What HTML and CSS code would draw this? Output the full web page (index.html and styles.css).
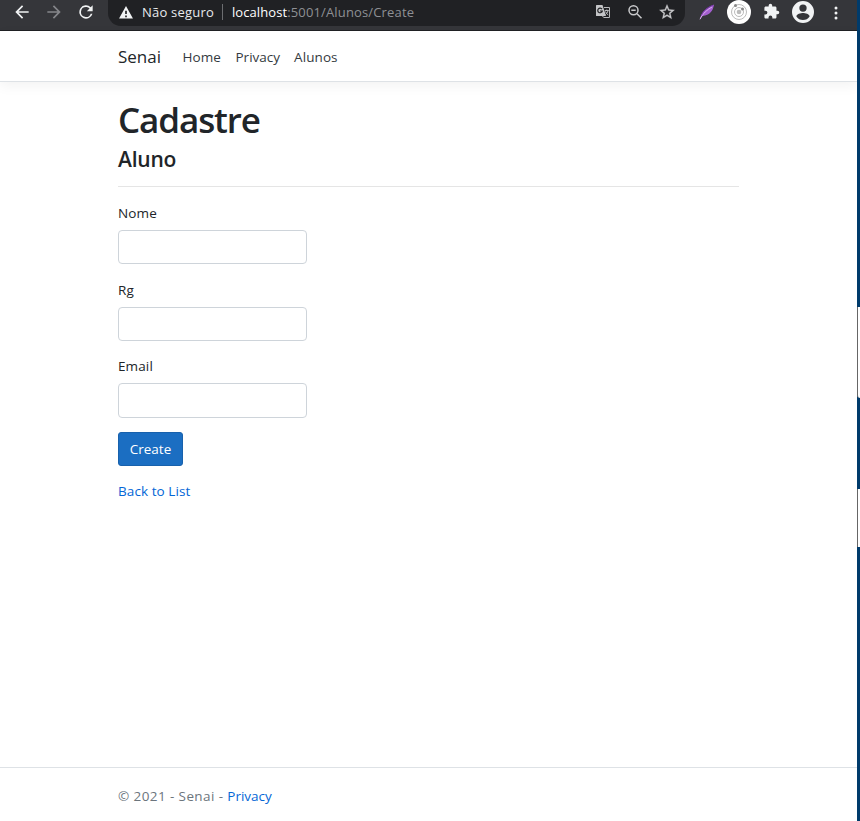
FILE: index.html
```html
<!DOCTYPE html>
<html lang="pt-BR">
<head>
<meta charset="utf-8">
<title>Create - Senai</title>
<link rel="stylesheet" href="styles.css">
</head>
<body>
<div class="window">
  <header class="toolbar">
    <svg class="ico back" viewBox="0 0 24 24"><path d="M20 11H7.8l5.6-5.6L12 4l-8 8 8 8 1.4-1.4L7.8 13H20z"/></svg>
    <svg class="ico forward" viewBox="0 0 24 24"><path d="M4 11h12.2l-5.6-5.6L12 4l8 8-8 8-1.4-1.4 5.6-5.6H4z"/></svg>
    <svg class="ico reload" viewBox="0 0 24 24"><path d="M17.65 6.35A8 8 0 1 0 19.73 14h-2.08A6 6 0 1 1 12 6c1.66 0 3.14.69 4.22 1.78L13 11h7V4z"/></svg>
    <div class="address">
      <svg class="warn" viewBox="0 0 16 14"><path fill-rule="evenodd" d="M8 0l7.500 13.500H.5zM7.100 5v3.700h1.800V5zM7.100 10.200v1.800h1.800v-1.800z"/></svg>
      <span class="security">Não seguro</span>
      <span class="divider"></span>
      <span class="url"><b>localhost</b><span class="path">:5001/Alunos/Create</span></span>
      <div class="actions">
        <svg class="translate" viewBox="0 0 16 16"><path class="fill" d="M1.500 1h6l3.500 11H1.500Q1 12 1 11.500v-10Q1 1 1.500 1z"/><path class="line" d="M9 3.500h5.500v10H8.700L7.500 12"/><path class="dark" d="M7 5.200A2.300 2.300 0 1 0 7.300 7H5"/><path class="line" d="M9.800 6.500h4M11.800 5.500v1M13 6.700c-.5 2-1.500 3-2.600 4M10.500 7.500c.5 1.500 1.500 2.500 2.700 3.500"/></svg>
        <svg class="search" viewBox="0 0 16 16"><circle cx="6.500" cy="6.200" r="4.500"/><path d="M10 9.700l4.500 4.500M4.300 6.200h4.400"/></svg>
        <svg class="star" viewBox="0 0 24 24"><path d="M22 9.240l-7.190-.62L12 2 9.190 8.630 2 9.240l5.460 4.730L5.820 21 12 17.270 18.180 21l-1.630-7.030zM12 15.400l-3.760 2.270 1-4.280-3.320-2.880 4.380-.38L12 6.100l1.710 4.040 4.380.38-3.320 2.880 1 4.280z"/></svg>
      </div>
    </div>
    <svg class="feather" viewBox="0 0 16 16"><path d="M1 15C2 10 4 6 15 .5 14 7 11 11 3.500 12z" fill="#a45fd0"/><path d="M1 15.300C4 9 8 6 13 3" fill="none" stroke="#d9b2ed"/><path d="M2.500 11.500C4 7 8 3.500 14 1.300" fill="none" stroke="#7b38ad"/></svg>
    <svg class="orbit" viewBox="0 0 24 24"><circle cx="12" cy="12" r="12" fill="#fff"/><g fill="none" stroke="#bbb"><circle cx="12" cy="12" r="7.500"/><circle cx="12" cy="12" r="4.500"/></g><circle cx="12" cy="12" r="2.300" fill="#bbb"/><circle cx="8.500" cy="5.500" r="1.500" fill="#888"/><circle cx="15.500" cy="9" r="1.500" fill="#888"/></svg>
    <svg class="puzzle" viewBox="0 0 24 24"><path d="M20.500 11H19V7c0-1.100-.9-2-2-2h-4V3.500a2.500 2.500 0 0 0-5 0V5H4c-1.100 0-2 .9-2 2v3.800h1.500a2.700 2.700 0 0 1 0 5.400H2V20c0 1.100.9 2 2 2h3.800v-1.500a2.700 2.700 0 0 1 5.400 0V22H17c1.100 0 2-.9 2-2v-4h1.500a2.500 2.500 0 0 0 0-5z"/></svg>
    <svg class="profile" viewBox="0 0 24 24"><path fill-rule="evenodd" d="M12 0a12 12 0 1 0 0 24 12 12 0 0 0 0-24zm0 3.700a4 4 0 1 1 0 8 4 4 0 0 1 0-8zm0 17a8.600 8.600 0 0 1-7.200-3.900c0-2.400 4.800-3.700 7.200-3.700s7.200 1.300 7.200 3.700a8.600 8.600 0 0 1-7.200 3.900z"/></svg>
    <svg class="more" viewBox="0 0 4 14"><circle cx="2" cy="2" r="1.500"/><circle cx="2" cy="7" r="1.500"/><circle cx="2" cy="12" r="1.500"/></svg>
  </header>
  <nav class="navbar">
    <a class="brand">Senai</a>
    <a class="nav-home">Home</a>
    <a class="nav-privacy">Privacy</a>
    <a class="nav-alunos">Alunos</a>
  </nav>
  <main>
    <h1><span>Cadastre</span></h1>
    <h4><span>Aluno</span></h4>
    <hr>
    <form>
      <div class="group"><label for="nome">Nome</label><input id="nome" type="text"></div>
      <div class="group"><label for="rg">Rg</label><input id="rg" type="text"></div>
      <div class="group last"><label for="email">Email</label><input id="email" type="text"></div>
      <button type="button">Create</button>
    </form>
    <a class="list-link">Back to List</a>
  </main>
  <footer><span class="copy">© 2021 - Senai - </span><a>Privacy</a></footer>
</div>
<aside class="desktop"><i class="pane first"></i><i class="pane second"></i></aside>
</body>
</html>
```
FILE: styles.css
```css
* { box-sizing: border-box; }
body { margin: 0; height: 821px; overflow: hidden; display: flex; background: #fff; color: #212529; font: 13.5px/20px "Open Sans", "Noto Sans", sans-serif; }
.window { width: 857px; height: 821px; display: flex; flex-direction: column; }
.toolbar { height: 31px; flex: none; display: flex; align-items: flex-start; background: #35363a; border-bottom: 1px solid #202124; fill: #f1f3f4; }
svg { flex: none; display: block; }
.ico { width: 20px; height: 20px; margin-top: 2px; }
.back { margin-left: 12px; }
.forward { margin-left: 12px; fill: #85868a; }
.reload { margin-left: 12px; }
.address { width: 577px; height: 26px; margin-left: 12px; padding-left: 10px; display: flex; background: #202124; border-radius: 0 0 13px 13px; color: #e8eaed; line-height: 25px; font-size: 13px; white-space: nowrap; }
.warn { width: 16px; height: 13px; margin-top: 6px; }
.security { width: 72px; margin-left: 8px; letter-spacing: .22px; }
.divider { width: 1px; height: 16px; margin: 4px 9px 0 8px; background: #6c6d70; }
.url { width: 363px; }
.url b { font-weight: 400; color: #fff; letter-spacing: .08px; }
.path { color: #8e9094; letter-spacing: .15px; }
.actions { display: flex; fill: #c8c9cb; }
.translate { width: 16px; height: 16px; margin-top: 4px; }
.translate .fill { fill: #c4c5c7; }
.translate .line { fill: none; stroke: #b8b9bb; }
.translate .dark { fill: none; stroke: #202124; stroke-width: 1.200; }
.search { width: 16px; height: 16px; margin: 4px 0 0 16px; fill: none; stroke: #c8c9cb; stroke-width: 1.500; }
.star { width: 18px; height: 18px; margin: 3px 0 0 15px; stroke: #c8c9cb; stroke-width: .4; }
.feather { width: 16px; height: 16px; margin: 4px 0 0 14px; }
.orbit { width: 24px; height: 24px; margin-left: 12px; }
.puzzle { width: 17px; height: 17px; margin: 3px 0 0 12px; }
.profile { width: 22px; height: 22px; margin: 1px 0 0 12px; }
.more { width: 4px; height: 14px; margin: 6px 0 0 20px; }
.navbar { height: 51px; flex: none; display: flex; padding: 0 118px; border-bottom: 1px solid #dee2e6; box-shadow: 0 4px 12px rgba(0,0,0,.05); line-height: 53px; color: #343a40; }
.brand { width: 64.500px; font-size: 17px; line-height: 51px; color: #222629; }
.nav-home { width: 53px; letter-spacing: .1px; }
.nav-privacy { width: 58.500px; }
.nav-alunos { letter-spacing: .1px; }
main { flex: 1; padding: 14px 118px 0; }
h1, h4 { margin: 0; font-weight: 600; }
h1 { font-size: 35px; line-height: 47px; letter-spacing: -1.100px; }
h4 { font-size: 21px; line-height: 32px; letter-spacing: -.2px; }
hr { margin: 11px 0 16px; border: 0; border-top: 1px solid #e5e5e5; }
label { display: block; margin-bottom: 7px; letter-spacing: .12px; }
input { display: block; width: 189px; height: 34px; border: 1px solid #ced4da; border-radius: 4px; background: #fff; }
.group { margin-bottom: 16px; }
.group:nth-child(2) { margin-bottom: 15px; }
.group.last { margin-bottom: 14px; }
.last input { height: 35px; }
button { display: block; width: 65px; height: 34px; padding: 0; border: 1px solid #1861ac; border-radius: 3px; background: #1b6ec2; color: #fff; font: inherit; }
.list-link { display: block; width: max-content; margin-top: 15px; color: #0366d6; letter-spacing: .08px; }
footer { height: 54px; flex: none; padding: 0 118px; border-top: 1px solid #dee2e6; line-height: 56px; color: #6c757d; white-space: pre; }
.copy { letter-spacing: .4px; }
footer a { color: #0366d6; }
.desktop { width: 3px; height: 821px; background: #003b6b; }
.pane { display: block; height: 91px; border-left: 1px solid #666; background: #fff; }
.first { margin-top: 307px; border-bottom-left-radius: 3px; }
.second { height: 58px; margin-top: 91px; }
```
